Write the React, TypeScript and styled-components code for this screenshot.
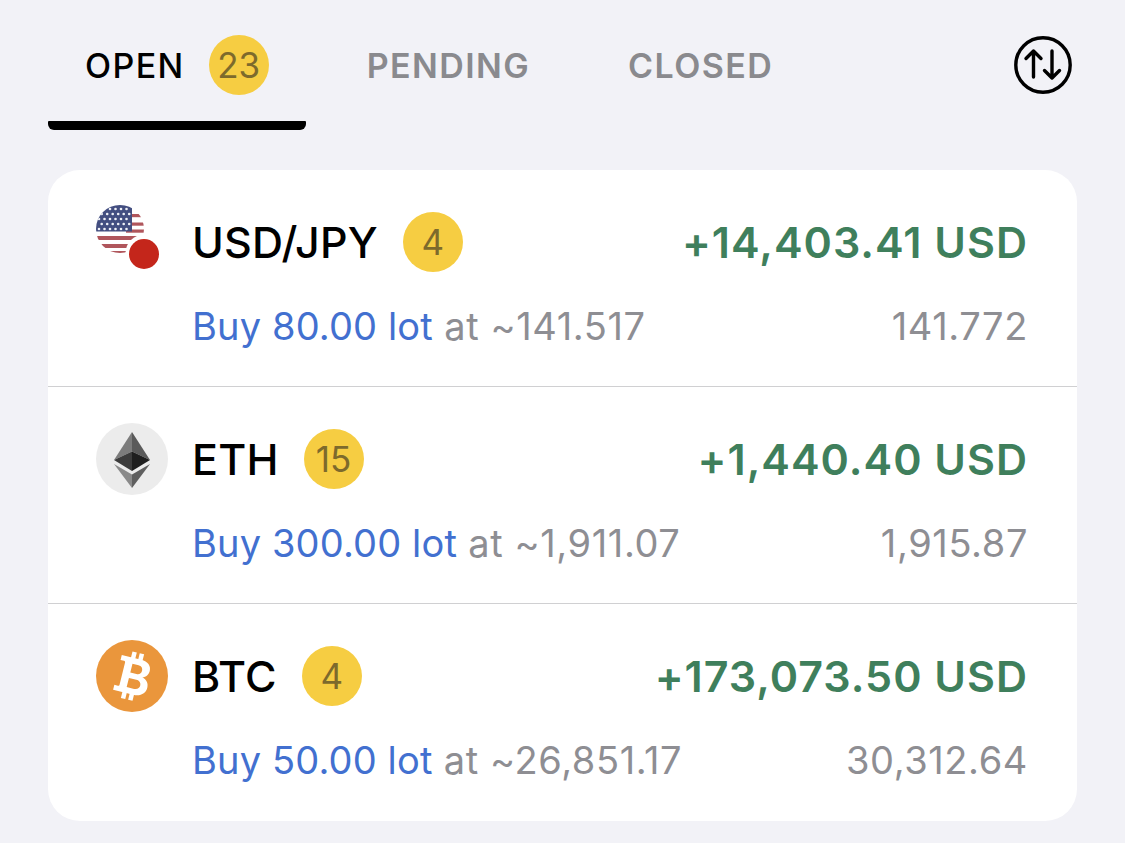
import React from "react";
import styled, { createGlobalStyle } from "styled-components";

const GlobalStyle = createGlobalStyle`
    html, body {
        margin: 0;
        background: #f2f2f7;
        font-family: Inter, "Liberation Sans", sans-serif;
    }
`;

const Page = styled.div`
    width: 1125px;
    height: 843px;
    overflow: hidden;
    padding: 0 48px;
    box-sizing: border-box;
`;

const TabBar = styled.div`
    display: flex;
    align-items: flex-start;
    height: 130px;
    margin-bottom: 40px;
`;

const Tab = styled.div<{ $active?: boolean }>`
    display: flex;
    align-items: center;
    gap: 24px;
    height: 130px;
    padding: 0 37px;
    margin-right: 24px;
    box-sizing: border-box;
    position: relative;
    font-size: 34px;
    font-weight: ${(p) => (p.$active ? 550 : 600)};
    letter-spacing: 1.4px;
    color: ${(p) => (p.$active ? "#000000" : "#8a8a8e")};

    &::after {
        content: "";
        display: ${(p) => (p.$active ? "block" : "none")};
        position: absolute;
        left: 0;
        right: 0;
        bottom: 0;
        height: 9px;
        background: #000;
        border-radius: 1px 1px 6px 6px;
    }
`;

const SortButton = styled.div`
    margin-left: auto;
    margin-right: 5px;
    height: 130px;
    display: flex;
    align-items: center;
`;

const Badge = styled.span`
    width: 60px;
    height: 60px;
    border-radius: 50%;
    background: #f6cd42;
    color: #7d6a2c;
    font-size: 35px;
    font-weight: 400;
    letter-spacing: 0;
    display: flex;
    align-items: center;
    justify-content: center;
    flex-shrink: 0;
`;

const Card = styled.div`
    background: #ffffff;
    border-radius: 32px;
    overflow: hidden;
`;

const Row = styled.div`
    height: 217px;
    box-sizing: border-box;
    display: flex;
    padding: 36px 49px 0 48px;
    border-bottom: 1px solid #d0d0d2;

    &:last-child {
        border-bottom: none;
    }
`;

const IconBox = styled.div`
    width: 72px;
    height: 72px;
    flex-shrink: 0;
    margin-right: 24px;
`;

const Info = styled.div`
    flex: 1;
    display: flex;
    flex-direction: column;
    min-width: 0;
`;

const Line = styled.div`
    display: flex;
    align-items: center;
    justify-content: space-between;
`;

const TopLine = styled(Line)`
    height: 72px;
`;

const BottomLine = styled(Line)`
    height: 48px;
    margin-top: 24px;
    font-size: 38px;
    letter-spacing: 0.6px;
    color: #8e8e93;
`;

const Symbol = styled.div`
    display: flex;
    align-items: center;
    gap: 25px;
    font-size: 43px;
    font-weight: 550;
    letter-spacing: 0.2px;
    color: #000;
`;

const Profit = styled.div`
    font-size: 43px;
    font-weight: 600;
    letter-spacing: 1px;
    color: #3f7f5c;
`;

const Trade = styled.span`
    color: #4270d0;
    letter-spacing: 0.15px;
`;

const FlagSvg = styled.svg`
    display: block;
    overflow: visible;
`;

const usStripesTop = [8, 16.5, 23.5];
const usStripesBottom = [30, 38, 45];
const starRows = [3, 8, 13, 18, 23];
const starCols = [3, 8.5, 14, 19.5, 25, 30.5];

function UsdJpyIcon() {
    return (
        <FlagSvg width="72" height="72" viewBox="0 0 72 72">
            <defs>
                <clipPath id="usClip">
                    <circle cx="24" cy="23" r="24" />
                </clipPath>
            </defs>
            <g clipPath="url(#usClip)">
                <rect x="0" y="-1" width="48" height="48" fill="#fff" />
                {usStripesTop.map((y) => (
                    <rect key={y} x="30" y={y} width="18" height="3.2" fill="#b0565c" />
                ))}
                {usStripesBottom.map((y) => (
                    <rect key={y} x="0" y={y} width="48" height="4" fill="#b0565c" />
                ))}
                <rect x="0" y="-1" width="36" height="26.5" fill="#434e80" />
                {starRows.map((y, r) =>
                    starCols.map((x) => (
                        <circle key={`${x}-${y}`} cx={x + (r % 2) * 2.7} cy={y} r="1.3" fill="#eef0f6" />
                    ))
                )}
            </g>
            <circle cx="48" cy="47" r="18.5" fill="#fff" />
            <circle cx="48" cy="48" r="15" fill="#c4261b" />
        </FlagSvg>
    );
}

function EthIcon() {
    return (
        <svg width="72" height="72" viewBox="0 0 72 72">
            <circle cx="36" cy="36" r="36" fill="#ececec" />
            <polygon points="36,9 18,37 36,28.5" fill="#7c7c7c" />
            <polygon points="36,9 54,37 36,28.5" fill="#5a5a5a" />
            <polygon points="36,28.5 18,37 36,48" fill="#3c3c3c" />
            <polygon points="36,28.5 54,37 36,48" fill="#1f1f1f" />
            <polygon points="18,41 36,51.5 36,65" fill="#8a8a8a" />
            <polygon points="54,41 36,51.5 36,65" fill="#5f5f5f" />
        </svg>
    );
}

function BtcIcon() {
    return (
        <svg width="72" height="72" viewBox="0 0 72 72">
            <circle cx="36" cy="36" r="36" fill="#ea963c" />
            <g transform="rotate(14 36 36)" fill="#fff">
                <rect x="30.5" y="12" width="4.5" height="8" />
                <rect x="38" y="12" width="4.5" height="8" />
                <rect x="30.5" y="52" width="4.5" height="8" />
                <rect x="38" y="52" width="4.5" height="8" />
                <path
                    fillRule="evenodd"
                    d="M21 18h20c7 0 11 3.6 11 8.8 0 3.8-2 6.8-5.6 8 4.6 1.2 7.3 4.4 7.3 9 0 6-4.6 10.2-12 10.2H21v-5.2h3.6c1 0 1.4-.6 1.4-1.4V24.6c0-.8-.4-1.4-1.4-1.4H21V18zm12.5 6v9h6.3c3 0 4.7-1.8 4.7-4.5s-1.7-4.5-4.7-4.5h-6.3zm0 14.6V48h7.6c3.2 0 5.2-1.8 5.2-4.7s-2-4.7-5.2-4.7h-7.6z"
                />
            </g>
        </svg>
    );
}

function SortIcon() {
    return (
        <svg width="58" height="58" viewBox="0 0 58 58" fill="none" stroke="#000" strokeWidth="3.4" strokeLinecap="round" strokeLinejoin="round">
            <circle cx="29" cy="29" r="27.2" />
            <path d="M19.5 41V15M12 22.5l7.5-7.5 7.5 7.5" />
            <path d="M38 15v27M30.5 34.5l7.5 7.5 7.5-7.5" />
        </svg>
    );
}

const positions = [
    { icon: <UsdJpyIcon />, symbol: "USD/JPY", count: 4, profit: "+14,403.41 USD", trade: "Buy 80.00 lot", at: "at ~141.517", price: "141.772" },
    { icon: <EthIcon />, symbol: "ETH", count: 15, profit: "+1,440.40 USD", trade: "Buy 300.00 lot", at: "at ~1,911.07", price: "1,915.87" },
    { icon: <BtcIcon />, symbol: "BTC", count: 4, profit: "+173,073.50 USD", trade: "Buy 50.00 lot", at: "at ~26,851.17", price: "30,312.64" },
];

export default function App() {
    return (
        <Page>
            <GlobalStyle />
            <TabBar>
                <Tab $active>
                    OPEN
                    <Badge>23</Badge>
                </Tab>
                <Tab>PENDING</Tab>
                <Tab>CLOSED</Tab>
                <SortButton>
                    <SortIcon />
                </SortButton>
            </TabBar>
            <Card>
                {positions.map((p) => (
                    <Row key={p.symbol}>
                        <IconBox>{p.icon}</IconBox>
                        <Info>
                            <TopLine>
                                <Symbol>
                                    {p.symbol}
                                    <Badge>{p.count}</Badge>
                                </Symbol>
                                <Profit>{p.profit}</Profit>
                            </TopLine>
                            <BottomLine>
                                <span>
                                    <Trade>{p.trade}</Trade> {p.at}
                                </span>
                                <span>{p.price}</span>
                            </BottomLine>
                        </Info>
                    </Row>
                ))}
            </Card>
        </Page>
    );
}
